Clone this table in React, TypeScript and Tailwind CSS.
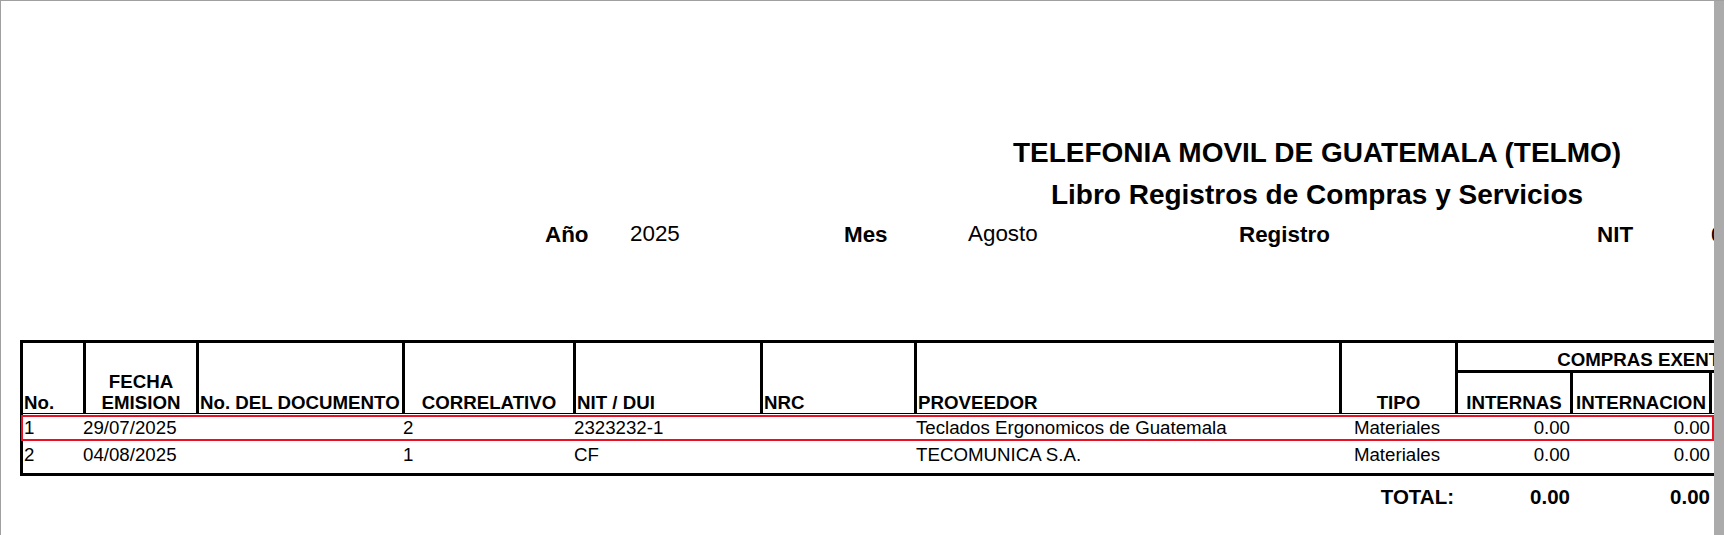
import React from 'react';

interface Row {
  no: string;
  fecha: string;
  correlativo: string;
  nit: string;
  proveedor: string;
  tipo: string;
  internas: string;
  internacion: string;
}

const rows: Row[] = [
  { no: '1', fecha: '29/07/2025', correlativo: '2', nit: '2323232-1', proveedor: 'Teclados Ergonomicos de Guatemala', tipo: 'Materiales', internas: '0.00', internacion: '0.00' },
  { no: '2', fecha: '04/08/2025', correlativo: '1', nit: 'CF', proveedor: 'TECOMUNICA S.A.', tipo: 'Materiales', internas: '0.00', internacion: '0.00' },
];

const HeaderCell: React.FC<{ w: string; align?: 'left' | 'center'; children: React.ReactNode }> = ({ w, align = 'left', children }) => (
  <div className={`${w} h-full shrink-0 border-r-[3px] border-black flex items-end ${align === 'center' ? 'justify-center text-center' : 'pl-[1px]'}`}>
    <span className="leading-[20px]">{children}</span>
  </div>
);

const DataRow: React.FC<{ row: Row; selected?: boolean; h: string }> = ({ row, selected, h }) => (
  <div className={`relative flex ${h} leading-[27px]`}>
    <div className="w-[60px] shrink-0 pl-[1px]">{row.no}</div>
    <div className="w-[113px] shrink-0">{row.fecha}</div>
    <div className="w-[206px] shrink-0"></div>
    <div className="w-[171px] shrink-0 pl-[1px]">{row.correlativo}</div>
    <div className="w-[187px] shrink-0 pl-[1px]">{row.nit}</div>
    <div className="w-[154px] shrink-0"></div>
    <div className="w-[425px] shrink-0 pl-[2px]">{row.proveedor}</div>
    <div className="w-[116px] shrink-0 text-center">{row.tipo}</div>
    <div className="w-[115px] shrink-0 text-right">{row.internas}</div>
    <div className="w-[140px] shrink-0 text-right">{row.internacion}</div>
    {selected && (
      <div className="absolute left-[-2px] top-[1px] w-[1693px] h-[26px] border-2 border-[#e81123]" />
    )}
  </div>
);

export default function App() {
  return (
    <div className="flex w-[1724px] h-[535px] bg-white border-t border-l border-[#a0a0a0] text-black font-['Liberation_Sans',Arial,sans-serif]">
      <div className="w-[1713px] h-full overflow-hidden">
        <div className="pt-[136px]">
          <div className="ml-[916px] w-[800px] text-center font-bold">
            <div className="text-[28px] leading-[32px] whitespace-nowrap">TELEFONIA MOVIL DE GUATEMALA (TELMO)</div>
            <div className="mt-[10px] text-[28px] leading-[32px] whitespace-nowrap">Libro Registros de Compras y Servicios</div>
          </div>

          <div className="mt-[11px] flex text-[22.4px] leading-[26px] pl-[544px] whitespace-nowrap">
            <span className="w-[85px] shrink-0 font-bold">Año</span>
            <span className="w-[214px] shrink-0 -translate-y-[1px]">2025</span>
            <span className="w-[124px] shrink-0 font-bold">Mes</span>
            <span className="w-[271px] shrink-0 -translate-y-[1px]">Agosto</span>
            <span className="w-[358px] shrink-0 font-bold">Registro</span>
            <span className="w-[114px] shrink-0 font-bold">NIT</span>
            <span className="shrink-0">0614-290591-101-3</span>
          </div>

          <div className="mt-[92px] ml-[19px] w-[1880px] border-t-[3px] border-l-[3px] border-b-[3px] border-black text-[18.7px]">
            <div className="flex h-[71px] border-b border-black font-bold whitespace-nowrap">
              <HeaderCell w="w-[63px]">No.</HeaderCell>
              <HeaderCell w="w-[113px]" align="center">
                <span className="block leading-[23px]">FECHA</span>
                <span className="block">EMISION</span>
              </HeaderCell>
              <HeaderCell w="w-[206px]">No. DEL DOCUMENTO</HeaderCell>
              <HeaderCell w="w-[171px]" align="center">CORRELATIVO</HeaderCell>
              <HeaderCell w="w-[187px]">NIT / DUI</HeaderCell>
              <HeaderCell w="w-[154px]">NRC</HeaderCell>
              <HeaderCell w="w-[425px]">PROVEEDOR</HeaderCell>
              <HeaderCell w="w-[116px]" align="center">TIPO</HeaderCell>
              <div className="w-[386px] h-full shrink-0 flex flex-col">
                <div className="h-[30px] shrink-0 border-b-[3px] border-black flex items-end justify-center">
                  <span className="leading-[20px]">COMPRAS EXENTAS</span>
                </div>
                <div className="flex-1 flex">
                  <HeaderCell w="w-[115px]" align="center">INTERNAS</HeaderCell>
                  <HeaderCell w="w-[139px]" align="center">INTERNACION</HeaderCell>
                  <div className="w-[132px] h-full shrink-0 flex items-end pl-[8px]">
                    <span className="leading-[20px]">IMPORTACION</span>
                  </div>
                </div>
              </div>
            </div>

            <DataRow row={rows[0]} selected h="h-[27px]" />
            <DataRow row={rows[1]} h="h-[32px]" />
          </div>

          <div className="mt-[7px] ml-[19px] flex font-bold text-[20.5px] leading-[27px] whitespace-nowrap">
            <div className="w-[1434px] shrink-0 text-right">TOTAL:</div>
            <div className="w-[116px] shrink-0 text-right">0.00</div>
            <div className="w-[140px] shrink-0 text-right">0.00</div>
          </div>
        </div>
      </div>
      <div className="w-[10px] h-full shrink-0 bg-[#ababab]" />
    </div>
  );
}
